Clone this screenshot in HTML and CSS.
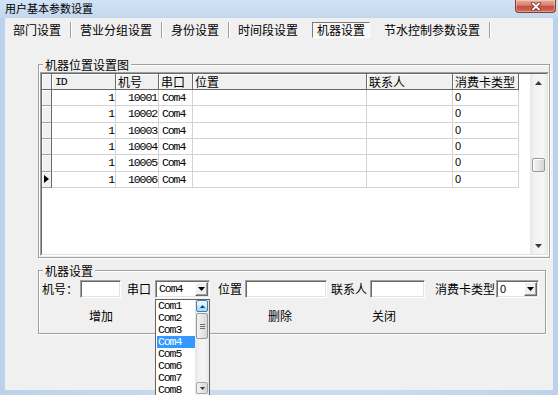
FILE: index.html
```html
<!DOCTYPE html>
<html lang="zh">
<head>
<meta charset="utf-8">
<title>用户基本参数设置</title>
<link rel="stylesheet" href="styles.css">
</head>
<body>
<div class="window">
  <div class="titlebar">
    <span class="title">用户基本参数设置</span>
    <span class="close">
      <svg width="12" height="9" viewBox="0 0 12 9"><path d="M3 1.5L9 7.5M9 1.5L3 7.5" stroke="#6b2419" stroke-width="3.6" stroke-linecap="round"/><path d="M3 1.5L9 7.5M9 1.5L3 7.5" stroke="#fff" stroke-width="2" stroke-linecap="round"/></svg>
    </span>
  </div>
  <div class="client">
    <div class="tabs">
      <span class="tab">部门设置</span><span class="sep"></span>
      <span class="tab">营业分组设置</span><span class="sep"></span>
      <span class="tab">身份设置</span><span class="sep"></span>
      <span class="tab">时间段设置</span><span class="sep hide"></span>
      <span class="tab active">机器设置</span><span class="sep hide"></span>
      <span class="tab">节水控制参数设置</span><span class="sep"></span>
    </div>

    <fieldset class="group group-grid">
      <legend>机器位置设置图</legend>
      <div class="grid">
        <div class="grid-inner">
          <div class="table">
            <div class="th ind"></div>
            <div class="th lat">ID</div>
            <div class="th">机号</div>
            <div class="th">串口</div>
            <div class="th">位置</div>
            <div class="th">联系人</div>
            <div class="th">消费卡类型</div>

            <div class="ind"></div><div class="td num">1</div><div class="td num">10001</div><div class="td">Com4</div><div class="td"></div><div class="td"></div><div class="td zero">0</div>
            <div class="ind"></div><div class="td num">1</div><div class="td num">10002</div><div class="td">Com4</div><div class="td"></div><div class="td"></div><div class="td zero">0</div>
            <div class="ind"></div><div class="td num">1</div><div class="td num">10003</div><div class="td">Com4</div><div class="td"></div><div class="td"></div><div class="td zero">0</div>
            <div class="ind"></div><div class="td num">1</div><div class="td num">10004</div><div class="td">Com4</div><div class="td"></div><div class="td"></div><div class="td zero">0</div>
            <div class="ind"></div><div class="td num">1</div><div class="td num">10005</div><div class="td">Com4</div><div class="td"></div><div class="td"></div><div class="td zero">0</div>
            <div class="ind cur"><span class="caret"></span></div><div class="td num">1</div><div class="td num">10006</div><div class="td">Com4</div><div class="td"></div><div class="td"></div><div class="td zero">0</div>
          </div>
          <div class="vscroll">
            <div class="arrow"><svg width="7" height="4" viewBox="0 0 7 4"><path d="M0 4L3.5 0L7 4Z" fill="#3a3a3a"/></svg></div>
            <div class="track"><div class="thumb"></div></div>
            <div class="arrow"><svg width="7" height="4" viewBox="0 0 7 4"><path d="M0 0L3.5 4L7 0Z" fill="#3a3a3a"/></svg></div>
          </div>
        </div>
      </div>
    </fieldset>

    <fieldset class="group group-form">
      <legend>机器设置</legend>
      <div class="form-row">
        <span class="lbl">机号：</span>
        <span class="txt w41 ml2"></span>
        <span class="lbl ml6">串口</span>
        <span class="combo w55 ml4"><span class="combo-val">Com4</span><span class="drop-btn"><svg width="7" height="4" viewBox="0 0 7 4"><path d="M0 0L3.5 4L7 0Z" fill="#000"/></svg></span></span>
        <span class="lbl ml8">位置</span>
        <span class="txt w82 ml3"></span>
        <span class="lbl ml4">联系人</span>
        <span class="txt w55 ml3"></span>
        <span class="lbl ml10">消费卡类型</span>
        <span class="combo w43 ml1"><span class="combo-val zero">0</span><span class="drop-btn"><svg width="7" height="4" viewBox="0 0 7 4"><path d="M0 0L3.5 4L7 0Z" fill="#000"/></svg></span></span>
      </div>
      <div class="btn-row">
        <button class="flat-btn ml47">增加</button>
        <button class="flat-btn ml155">删除</button>
        <button class="flat-btn ml80">关闭</button>
      </div>
    </fieldset>
  </div>

  <div class="dropdown">
    <div class="items">
      <div class="item">Com1</div>
      <div class="item">Com2</div>
      <div class="item">Com3</div>
      <div class="item sel">Com4</div>
      <div class="item">Com5</div>
      <div class="item">Com6</div>
      <div class="item">Com7</div>
      <div class="item">Com8</div>
    </div>
    <div class="lscroll">
      <div class="lbtn hot"><svg width="5" height="3" viewBox="0 0 5 3"><path d="M0 3L2.5 0L5 3Z" fill="#1c3b5a"/></svg></div>
      <div class="ltrack"><div class="lthumb"><span class="grip"></span></div></div>
      <div class="lbtn"><svg width="5" height="3" viewBox="0 0 5 3"><path d="M0 0L2.5 3L5 0Z" fill="#3a3a3a"/></svg></div>
    </div>
  </div>
</div>
</body>
</html>
```

FILE: styles.css
```css
* { box-sizing: border-box; }
html, body { margin: 0; padding: 0; }
body {
  width: 558px;
  height: 395px;
  overflow: hidden;
  font-family: "Noto Sans CJK SC", "Noto Sans", sans-serif;
  font-size: 12px;
  color: #000;
  background: #c4d8ee;
}
.window {
  position: relative;
  width: 558px;
  height: 395px;
  display: flex;
  flex-direction: column;
  background: linear-gradient(to right, #bcd2ec, #cbdcf1 40%, #c9dbf0 70%, #bcd2ec);
}

/* title bar */
.titlebar {
  height: 18px;
  flex: none;
  display: flex;
  justify-content: space-between;
  align-items: flex-start;
  padding: 0 2px 0 5px;
  background: linear-gradient(to bottom, #d3e3f5, #c2d7ee);
}
.title {
  font-size: 11px;
  line-height: 14px;
  margin-top: 1px;
}
.close {
  width: 41px;
  height: 13px;
  display: flex;
  align-items: center;
  justify-content: center;
  border: 1px solid #8a3a30;
  border-top: none;
  border-radius: 0 0 4px 4px;
  background: linear-gradient(to bottom, #e8a89a, #d98576 40%, #c5503f 55%, #d26b58);
  box-shadow: inset 0 0 0 1px rgba(255, 255, 255, 0.35);
}

/* client area */
.client {
  height: 372px;
  margin: 0 5px;
  flex: none;
  background: #f0f0f0;
  display: flex;
  flex-direction: column;
}

/* tabs */
.tabs {
  height: 21px;
  flex: none;
  display: flex;
  align-items: center;
  padding: 4px 0 1px 3px;
}
.tab {
  height: 16px;
  padding: 0 4px;
  border: 1px solid transparent;
  font-size: 12px;
  line-height: 14px;
  white-space: nowrap;
}
.tab.active {
  border-color: #7a7a7a #ffffff #ffffff #7a7a7a;
  background: #f7f7f7;
}
.sep {
  width: 2px;
  height: 16px;
  margin: 0 3px 0 4px;
  border-left: 1px solid #a0a0a0;
  border-right: 1px solid #ffffff;
}
.sep.hide { visibility: hidden; }

/* group boxes */
.group {
  min-width: 0;
  border: 1px solid #a0a0a0;
  box-shadow: inset 1px 1px 0 #ffffff, 1px 1px 0 #ffffff;
}
.group legend {
  font-size: 12px;
  line-height: 15px;
  padding: 0 2px;
  background: #f0f0f0;
}
.group-grid {
  margin: 18px 3px 0 33px;
  padding: 0 0 1px 1px;
}
.group-grid legend { margin-left: 3px; }
.group-form {
  margin: 5px 7px 0 33px;
  padding: 2px 0 7px 3px;
}
.group-form legend { margin-left: 1px; }

/* data grid */
.grid {
  height: 184px;
  border: 1px solid;
  border-color: #a0a0a0 #ffffff #ffffff #a0a0a0;
}
.grid-inner {
  height: 100%;
  display: flex;
  border: 1px solid;
  border-color: #696969 #e3e3e3 #e3e3e3 #696969;
  background: #ffffff;
}
.table {
  flex: 1;
  display: grid;
  grid-template-columns: 10px 64px 43px 34px 174px 86px 66px;
  grid-template-rows: 16px repeat(6, 16.33px);
  align-content: start;
}
.th {
  background: #f0f0f0;
  border-right: 1px solid #696969;
  border-bottom: 1px solid #696969;
  box-shadow: inset 1px 1px 0 #ffffff;
  font-size: 12px;
  line-height: 15px;
  padding-left: 2px;
  white-space: nowrap;
  overflow: hidden;
}
.th.lat {
  font-family: "Liberation Mono", monospace;
  font-size: 11.5px;
  letter-spacing: -1.1px;
  padding-left: 3px;
}
.ind {
  background: #f0f0f0;
  border-right: 1px solid #696969;
  border-bottom: 1px solid #a0a0a0;
  box-shadow: inset 1px 1px 0 #ffffff;
}
.th.ind { padding: 0; border-bottom-color: #696969; }
.ind.cur {
  display: flex;
  align-items: center;
  padding-left: 2px;
}
.caret {
  width: 0;
  height: 0;
  border-left: 5px solid #000;
  border-top: 4px solid transparent;
  border-bottom: 4px solid transparent;
}
.td {
  border-right: 1px solid #d3d3d3;
  border-bottom: 1px solid #d3d3d3;
  font-family: "Liberation Mono", monospace;
  font-size: 11.5px;
  letter-spacing: -1.1px;
  line-height: 15px;
  padding: 0 2px 0 3px;
  white-space: nowrap;
  overflow: hidden;
}
.td.num { text-align: right; padding-right: 1px; }
.zero {
  font-family: "Liberation Sans", sans-serif;
  font-size: 11px;
  letter-spacing: 0;
}
.td.zero { padding-left: 2px; letter-spacing: 0; font-size: 11px; }

/* main vertical scrollbar */
.vscroll {
  width: 17px;
  flex: none;
  display: flex;
  flex-direction: column;
  background: linear-gradient(to right, #e6e6e6, #f2f2f2 25%, #f6f6f6 75%, #ececec);
}
.arrow {
  height: 17px;
  flex: none;
  display: flex;
  align-items: center;
  justify-content: center;
}
.track { flex: 1; padding: 0 2px; }
.thumb {
  margin-top: 67px;
  height: 14px;
  border: 1px solid #9a9a9a;
  border-radius: 2px;
  background: linear-gradient(to right, #f4f4f4, #e6e6e6 50%, #d6d6d6);
  box-shadow: inset 1px 1px 0 #ffffff;
}

/* form controls */
.form-row {
  height: 18px;
  display: flex;
  align-items: center;
}
.lbl {
  font-size: 12px;
  line-height: 18px;
  white-space: nowrap;
}
.txt, .combo {
  height: 18px;
  flex: none;
  background: #ffffff;
  border: 1px solid;
  border-color: #a0a0a0 #ffffff #ffffff #a0a0a0;
  box-shadow: inset 1px 1px 0 #696969, inset -1px -1px 0 #e3e3e3;
}
.combo {
  display: flex;
  align-items: center;
  justify-content: space-between;
  padding: 1px 1px 1px 2px;
}
.combo-val {
  font-family: "Liberation Mono", monospace;
  font-size: 11.5px;
  letter-spacing: -1.1px;
  line-height: 14px;
  padding-left: 1px;
}
.combo-val.zero {
  font-family: "Liberation Sans", sans-serif;
  font-size: 11px;
  letter-spacing: 0;
}
.drop-btn {
  width: 13px;
  height: 14px;
  display: flex;
  align-items: center;
  justify-content: center;
  background: #f0f0f0;
  border: 1px solid;
  border-color: #ffffff #696969 #696969 #ffffff;
  box-shadow: inset -1px -1px 0 #a0a0a0;
}
.w41 { width: 41px; }
.w43 { width: 43px; }
.w55 { width: 55px; }
.w82 { width: 82px; }
.ml1 { margin-left: 1px; }
.ml2 { margin-left: 2px; }
.ml3 { margin-left: 3px; }
.ml4 { margin-left: 4px; }
.ml6 { margin-left: 6px; }
.ml8 { margin-left: 8px; }
.ml10 { margin-left: 10px; }
.ml47 { margin-left: 47px; }
.ml80 { margin-left: 80px; }
.ml155 { margin-left: 155px; }

.btn-row {
  height: 20px;
  margin-top: 8px;
  display: flex;
  align-items: center;
}
.flat-btn {
  width: 24px;
  padding: 0;
  border: none;
  background: transparent;
  font-family: "Noto Sans CJK SC", sans-serif;
  font-size: 12px;
  line-height: 20px;
  color: #000;
  white-space: nowrap;
}

/* open dropdown list (overlay) */
.dropdown {
  position: absolute;
  left: 155px;
  top: 299px;
  width: 55px;
  height: 97px;
  border: 1px solid #646464;
  background: #ffffff;
  display: flex;
  overflow: hidden;
}
.items {
  flex: 1;
  overflow: hidden;
}
.item {
  height: 12px;
  margin-left: 1px;
  padding-left: 1px;
  font-family: "Liberation Mono", monospace;
  font-size: 11.5px;
  letter-spacing: -1.1px;
  line-height: 12px;
}
.item.sel {
  background: #3399ff;
  color: #ffffff;
}
.lscroll {
  width: 14px;
  flex: none;
  display: flex;
  flex-direction: column;
  padding-bottom: 1px;
  background: linear-gradient(to right, #e6e6e6, #f2f2f2 30%, #f4f4f4 70%, #e8e8e8);
}
.lbtn {
  height: 12px;
  flex: none;
  margin: 0 1px;
  display: flex;
  align-items: center;
  justify-content: center;
  border: 1px solid #a8a8a8;
  border-radius: 2px;
  background: linear-gradient(to right, #f6f6f6, #e4e4e4 50%, #d8d8d8);
}
.lbtn.hot {
  border-color: #3c7fb1;
  background: linear-gradient(to bottom, #eaf6fd, #d9f0fc 45%, #bee6fd 50%, #a7d9f5);
}
.ltrack {
  flex: 1;
  padding: 1px 1px 0;
}
.lthumb {
  height: 26px;
  display: flex;
  align-items: center;
  justify-content: center;
  border: 1px solid #9a9a9a;
  border-radius: 2px;
  background: linear-gradient(to right, #f4f4f4, #e6e6e6 50%, #d6d6d6);
}
.grip {
  width: 5px;
  height: 5px;
  background: repeating-linear-gradient(to bottom, #6e6e6e 0, #6e6e6e 1px, transparent 1px, transparent 2px);
}
```
